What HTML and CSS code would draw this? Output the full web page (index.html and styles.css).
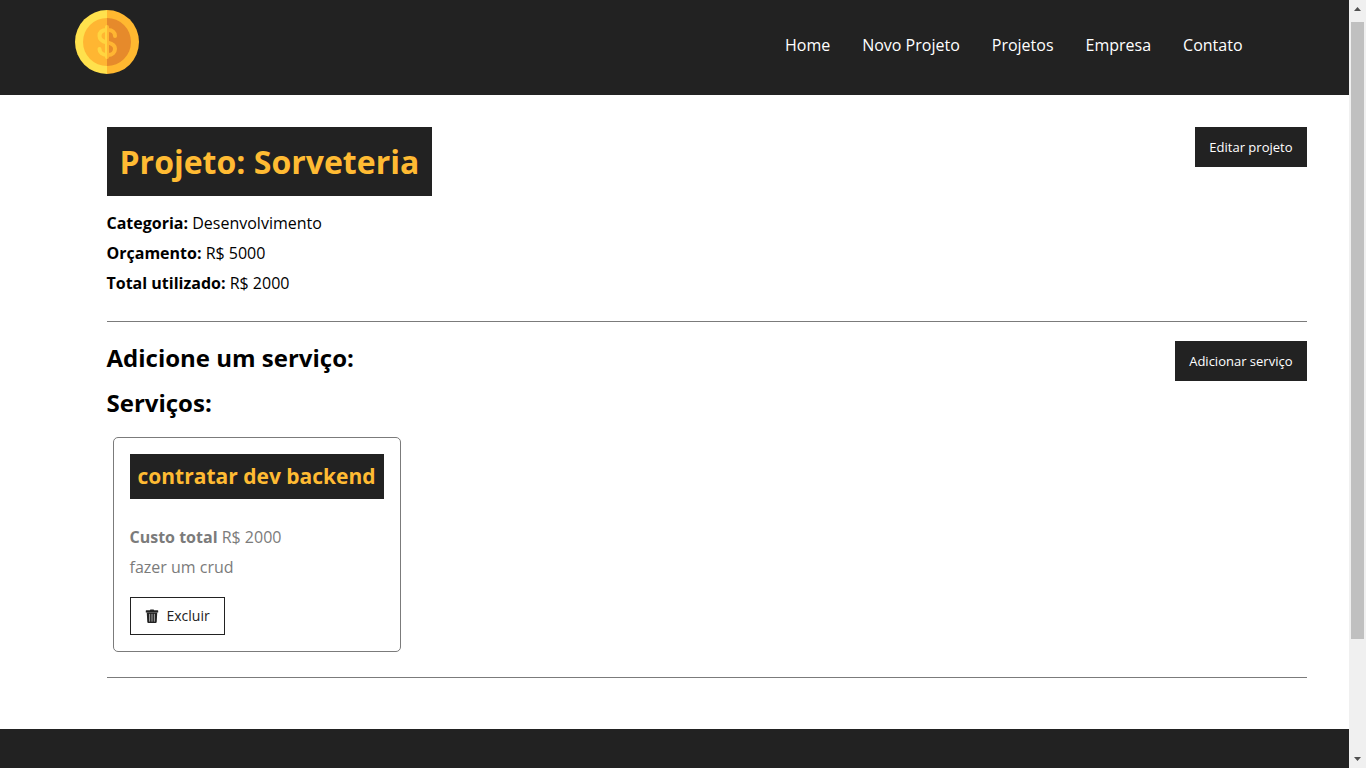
FILE: index.html
```html
<!DOCTYPE html>
<html lang="pt-BR">
<head>
  <meta charset="utf-8">
  <meta name="viewport" content="width=device-width, initial-scale=1">
  <title>Projeto: Sorveteria</title>
  <link rel="stylesheet" href="styles.css">
</head>
<body>
  <div class="page">
    <header class="navbar">
      <div class="container navbar-inner">
        <a class="logo" href="#" aria-label="Costs">
          <svg viewBox="0 0 64 64" width="64" height="64" aria-hidden="true">
            <path fill="#ffe14d" d="M32 0a32 32 0 0 0 0 64l5-32z"/>
            <path fill="#ffb830" d="M32 0a32 32 0 0 1 0 64z"/>
            <path fill="#ffb632" d="M32 8a24 24 0 0 0 0 48l4-24z"/>
            <path fill="#e68a2b" d="M32 8a24 24 0 0 1 0 48z"/>
            <g fill="none" stroke-width="4" stroke-linecap="round">
              <path stroke="#ffd540" d="M32 32.500c-4.500-1-7.500-2.500-7.500-6.500s3-6 7.500-6M32 45c-4.500 0-7.500-2.500-7.500-6"/>
              <path stroke="#ffb632" d="M33 20c4.500 0 7 2.500 7 6M33 32.600c4.200.9 7 2.600 7 6.200s-2.800 6.200-7 6.200"/>
            </g>
            <path fill="#ffd540" d="M32 15a2 2 0 0 0-2 2v30a2 2 0 0 0 2 2z"/>
            <path fill="#ffb632" d="M32 15a2 2 0 0 1 2 2v30a2 2 0 0 1-2 2z"/>
          </svg>
        </a>
        <nav class="menu">
          <a href="#">Home</a>
          <a href="#">Novo Projeto</a>
          <a href="#">Projetos</a>
          <a href="#">Empresa</a>
          <a href="#">Contato</a>
        </nav>
      </div>
    </header>

    <main class="container">
      <div class="project">
        <section class="section details">
          <div class="info">
            <h1>Projeto: Sorveteria</h1>
            <p><strong>Categoria:</strong> Desenvolvimento</p>
            <p><strong>Orçamento:</strong> R$ 5000</p>
            <p><strong>Total utilizado:</strong> R$ 2000</p>
          </div>
          <button class="btn" type="button">Editar projeto</button>
        </section>

        <section class="section services">
          <div class="services-head">
            <h2>Adicione um serviço:</h2>
            <button class="btn" type="button">Adicionar serviço</button>
          </div>
          <h2>Serviços:</h2>
          <article class="card">
            <h3>contratar dev backend</h3>
            <p><strong>Custo total</strong> R$ 2000</p>
            <p>fazer um crud</p>
            <button class="btn-remove" type="button">
              <svg viewBox="0 0 16 16" width="14" height="14" aria-hidden="true">
                <path fill="#222" d="M1.500 1.500h4L6.200.5h3.600l.7 1h4c.4 0 .6.300.6.600V4H.9V2.100c0-.3.200-.6.600-.6z"/>
                <path fill="#222" d="M2 4h12l-.6 10.500c0 .8-.7 1.500-1.500 1.500H4.100c-.8 0-1.500-.7-1.500-1.500z"/>
                <path stroke="#bbb" stroke-linecap="round" d="M5.300 6v8M8 6v8M10.700 6v8"/>
              </svg>
              Excluir
            </button>
          </article>
        </section>
      </div>
    </main>

    <footer class="footer"></footer>
  </div>

  <div class="scrollbar" aria-hidden="true">
    <svg viewBox="0 0 17 22" width="17" height="22"><path fill="#505050" d="M5 11l3.500-4 3.500 4z"/></svg>
    <div class="thumb"></div>
    <div class="track"></div>
    <svg viewBox="0 0 17 17" width="17" height="17"><path fill="#505050" d="M5 6h7l-3.500 4z"/></svg>
  </div>
</body>
</html>
```
FILE: styles.css
```css
* {
  margin: 0;
  padding: 0;
  box-sizing: border-box;
  font-family: "Open Sans", "Noto Sans", sans-serif;
}

body {
  display: flex;
  height: 100vh;
  overflow: hidden;
  color: #000;
  background: #fff;
  font-size: 16px;
  font-weight: 400;
  line-height: 22px;
}

.page {
  flex: 1;
  min-width: 0;
  display: flex;
  flex-direction: column;
}

.container {
  width: 100%;
  max-width: 1200px;
  margin: 0 auto;
}

.navbar {
  background: #222;
}

.navbar-inner {
  display: flex;
  justify-content: space-between;
  padding: 10px 32px 21px 0;
}

.logo svg {
  display: block;
}

.menu {
  display: flex;
  gap: 32px;
  padding-top: 24px;
}

.menu a {
  color: #fff;
  text-decoration: none;
}

.project {
  box-sizing: content-box;
  width: 100%;
  padding: 32px 32px 51px;
}

.section {
  border-bottom: 1px solid #7b7b7b;
}

.details {
  display: flex;
  justify-content: space-between;
  align-items: flex-start;
  margin-bottom: 19px;
  padding-bottom: 19px;
}

.details p,
.card p {
  margin-bottom: 8px;
}

strong {
  font-weight: 700;
}

h1 {
  margin-bottom: 16px;
  padding: 13px 13px 12px;
  color: #ffbb33;
  background: #222;
  font-size: 32px;
  font-weight: 700;
  line-height: 44px;
}

h2 {
  font-size: 24px;
  font-weight: 700;
  line-height: 34px;
}

.btn {
  height: 40px;
  padding: 0 14px;
  border: 0;
  color: #fff;
  background: #222;
  font-size: 13px;
  font-weight: 400;
  cursor: pointer;
}

.services {
  padding-bottom: 25px;
}

.services-head {
  display: flex;
  justify-content: space-between;
  margin-bottom: 5px;
}

.card {
  width: 24%;
  margin: 17px 6px 0;
  padding: 16px;
  border: 1px solid #7b7b7b;
  border-radius: 5px;
  color: #7b7b7b;
}

.card h3 {
  margin-bottom: 27px;
  padding: 8px;
  color: #ffbb33;
  background: #222;
  font-size: 21px;
  font-weight: 700;
  line-height: 29px;
  white-space: nowrap;
}

.btn-remove {
  display: flex;
  align-items: center;
  gap: 8px;
  height: 38px;
  margin-top: 19px;
  padding: 0 14px 1px;
  border: 1px solid #222;
  color: #222;
  background: #fff;
  font-size: 14px;
  font-weight: 400;
  cursor: pointer;
}

.footer {
  flex: 1;
  background: #222;
}

.scrollbar {
  display: flex;
  flex-direction: column;
  width: 17px;
  background: #f0f0f0;
}

.thumb {
  flex: 617;
  margin: 0 2px;
  background: #c0c0c0;
}

.track {
  flex: 112;
}
```
